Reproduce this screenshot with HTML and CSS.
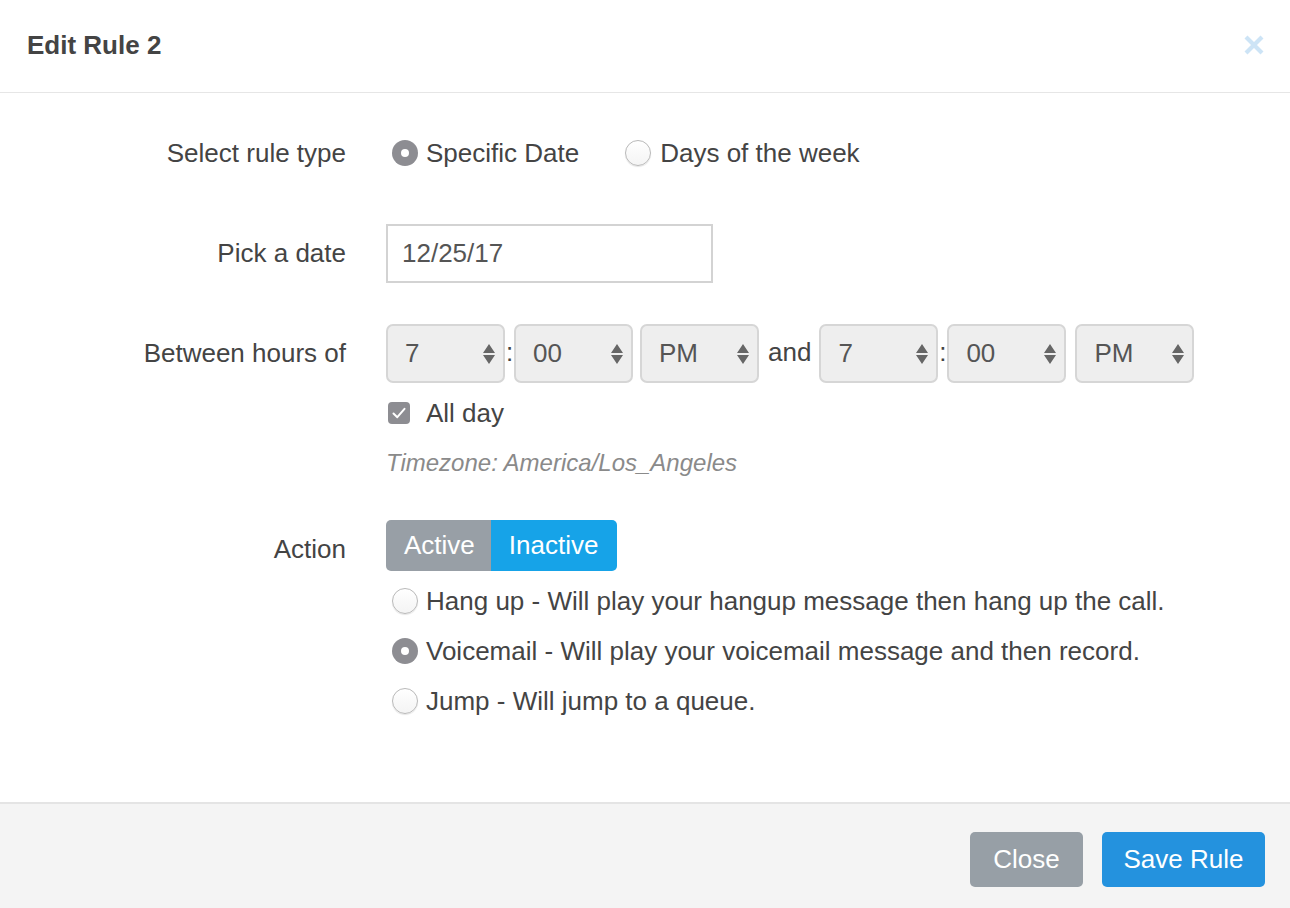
FILE: index.html
```html
<!DOCTYPE html>
<html>
<head>
<meta charset="utf-8">
<link rel="stylesheet" href="styles.css">
</head>
<body>
<div class="modal">
  <div class="modal-header">
    <h1 class="title">Edit Rule 2</h1>
    <svg class="close-x" width="22" height="22" viewBox="0 0 22 22"><path d="M3 3 L19 19 M19 3 L3 19" stroke="#cde4f6" stroke-width="4.2" stroke-linecap="butt"/></svg>
  </div>
  <div class="modal-body">
    <div class="row row-type">
      <div class="label">Select rule type</div>
      <div class="controls inline">
        <span class="radio checked"></span><span class="opt">Specific Date</span>
        <span class="radio second"></span><span class="opt">Days of the week</span>
      </div>
    </div>
    <div class="row row-date">
      <div class="label tall">Pick a date</div>
      <div class="controls">
        <div class="input">12/25/17</div>
      </div>
    </div>
    <div class="row row-hours">
      <div class="label tall">Between hours of</div>
      <div class="controls">
        <div class="times">
          <div class="select"><span>7</span><svg class="arrows" width="14" height="24" viewBox="0 0 14 24"><path d="M7 2 L13 11 H1 Z M7 22 L13 13 H1 Z" fill="#666"/></svg></div>
          <span class="colon">:</span>
          <div class="select"><span>00</span><svg class="arrows" width="14" height="24" viewBox="0 0 14 24"><path d="M7 2 L13 11 H1 Z M7 22 L13 13 H1 Z" fill="#666"/></svg></div>
          <div class="select ampm"><span>PM</span><svg class="arrows" width="14" height="24" viewBox="0 0 14 24"><path d="M7 2 L13 11 H1 Z M7 22 L13 13 H1 Z" fill="#666"/></svg></div>
          <span class="and">and</span>
          <div class="select"><span>7</span><svg class="arrows" width="14" height="24" viewBox="0 0 14 24"><path d="M7 2 L13 11 H1 Z M7 22 L13 13 H1 Z" fill="#666"/></svg></div>
          <span class="colon">:</span>
          <div class="select"><span>00</span><svg class="arrows" width="14" height="24" viewBox="0 0 14 24"><path d="M7 2 L13 11 H1 Z M7 22 L13 13 H1 Z" fill="#666"/></svg></div>
          <div class="select ampm2"><span>PM</span><svg class="arrows" width="14" height="24" viewBox="0 0 14 24"><path d="M7 2 L13 11 H1 Z M7 22 L13 13 H1 Z" fill="#666"/></svg></div>
        </div>
        <div class="allday">
          <span class="checkbox"><svg width="22" height="22" viewBox="0 0 22 22"><path d="M5.5 11.5 L9.3 15.2 L16.5 6.8" stroke="#fff" stroke-width="2" fill="none" stroke-linecap="round" stroke-linejoin="round"/></svg></span>
          <span class="opt">All day</span>
        </div>
        <div class="timezone">Timezone: America/Los_Angeles</div>
      </div>
    </div>
    <div class="row row-action">
      <div class="label action-label">Action</div>
      <div class="controls">
        <div class="btn-group">
          <span class="seg seg-active">Active</span><span class="seg seg-inactive">Inactive</span>
        </div>
        <div class="action-opt"><span class="radio"></span><span class="opt">Hang up - Will play your hangup message then hang up the call.</span></div>
        <div class="action-opt"><span class="radio checked"></span><span class="opt">Voicemail - Will play your voicemail message and then record.</span></div>
        <div class="action-opt"><span class="radio"></span><span class="opt">Jump - Will jump to a queue.</span></div>
      </div>
    </div>
  </div>
  <div class="modal-footer">
    <span class="btn btn-close">Close</span>
    <span class="btn btn-save">Save Rule</span>
  </div>
</div>
</body>
</html>
```
FILE: styles.css
```css
html, body {
  margin: 0;
  padding: 0;
  background: #fff;
}
body {
  font-family: "Liberation Sans", Arial, Helvetica, sans-serif;
  font-size: 26px;
  color: #444;
}
.modal {
  width: 1290px;
  height: 908px;
  display: flex;
  flex-direction: column;
}
.modal-header {
  height: 92px;
  border-bottom: 1px solid #e6e6e6;
  display: flex;
  align-items: center;
  justify-content: space-between;
  padding: 0 25px 0 27px;
  box-sizing: content-box;
}
.title {
  margin: 0;
  font-size: 26px;
  font-weight: bold;
  color: #444;
  line-height: 30px;
  padding-bottom: 2px;
}
.close-x {
  display: block;
  margin-top: -2px;
}
.modal-body {
  flex: 1;
  padding-top: 40px;
}
.row {
  display: grid;
  grid-template-columns: 346px 1fr;
  column-gap: 40px;
  align-items: start;
}
.label {
  text-align: right;
  line-height: 40px;
  color: #444;
}
.label.tall {
  line-height: 59px;
}
.controls.inline {
  display: flex;
  align-items: center;
  height: 40px;
}
.row-date {
  margin-top: 51px;
}
.row-hours {
  margin-top: 41px;
}
.row-action {
  margin-top: 37px;
}
.opt {
  color: #444;
  white-space: nowrap;
}
.radio {
  display: inline-block;
  width: 26px;
  height: 26px;
  border-radius: 50%;
  box-sizing: border-box;
  border: 1px solid #b9b9b9;
  background: linear-gradient(#ffffff, #f4f4f4);
  box-shadow: 0 1px 1px rgba(0,0,0,0.10);
  margin-left: 6px;
  margin-right: 8px;
  flex: none;
  position: relative;
}
.radio.checked {
  border: none;
  background: #8d8d92;
  box-shadow: none;
}
.radio.checked::after {
  content: "";
  position: absolute;
  left: 9px;
  top: 9px;
  width: 8px;
  height: 8px;
  border-radius: 50%;
  background: #fff;
}
.radio.second {
  margin-left: 46px;
  margin-right: 9px;
}
.input {
  width: 327px;
  height: 59px;
  box-sizing: border-box;
  border: 2px solid #d3d3d3;
  padding-left: 14px;
  line-height: 55px;
  color: #555;
}
.times {
  display: flex;
  align-items: center;
  height: 59px;
}
.select {
  width: 119px;
  height: 59px;
  box-sizing: border-box;
  border: 2px solid #d6d6d6;
  border-radius: 7px;
  background: #eeeeee;
  display: flex;
  align-items: center;
  justify-content: space-between;
  padding: 0 7px 0 17px;
  color: #555;
}
.arrows {
  display: block;
}
.colon {
  width: 9px;
  text-align: center;
  color: #444;
  margin-top: -3px;
}
.ampm {
  margin-left: 7px;
}
.ampm2 {
  margin-left: 9px;
}
.and {
  margin: -3px 8px 0 9px;
  color: #444;
}
.allday {
  display: flex;
  align-items: center;
  height: 40px;
  margin-top: 10px;
}
.checkbox {
  width: 22px;
  height: 22px;
  border-radius: 4px;
  background: #8d8d92;
  margin-left: 2px;
  margin-right: 16px;
  display: block;
}
.checkbox svg {
  display: block;
}
.timezone {
  margin-top: 10px;
  line-height: 40px;
  font-size: 24px;
  font-style: italic;
  color: #8a8a8a;
}
.action-label {
  line-height: 58px;
}
.btn-group {
  display: flex;
  height: 51px;
}
.seg {
  color: #fff;
  line-height: 51px;
  height: 51px;
}
.seg-active {
  background: #989fa6;
  padding: 0 16px 0 18px;
  border-radius: 5px 0 0 5px;
}
.seg-inactive {
  background: #16a3e8;
  padding: 0 19px 0 18px;
  border-radius: 0 5px 5px 0;
}
.action-opt {
  display: flex;
  align-items: center;
  height: 50px;
}
.btn-group + .action-opt {
  margin-top: 5px;
}
.modal-footer {
  height: 106px;
  border-top: 2px solid #e4e4e4;
  background: #f4f4f4;
  display: flex;
  justify-content: flex-end;
  align-items: flex-start;
  padding: 28px 25px 0 0;
  box-sizing: border-box;
  gap: 19px;
}
.btn {
  height: 55px;
  line-height: 55px;
  color: #fff;
  border-radius: 5px;
  text-align: center;
}
.btn-close {
  width: 113px;
  background: #979fa6;
}
.btn-save {
  width: 163px;
  background: #2492de;
}
```
